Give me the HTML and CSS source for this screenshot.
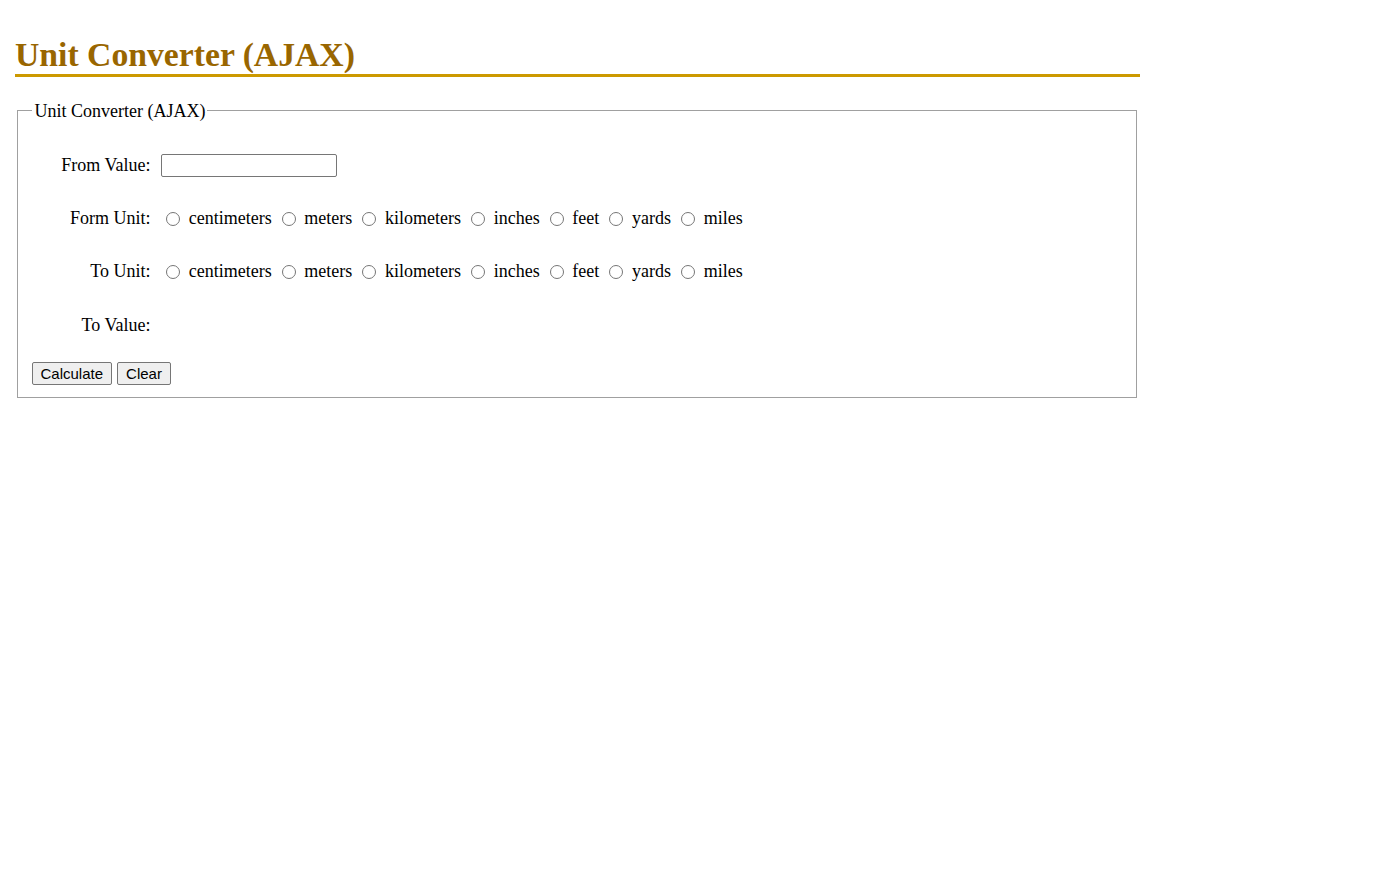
FILE: index.html
```html
<!DOCTYPE html>
<html lang="en">
<head>
<meta charset="utf-8">
<title>Unit Converter (AJAX)</title>
<link rel="stylesheet" href="styles.css">
</head>
<body>
<main class="page">
  <h1 class="title">Unit Converter (AJAX)</h1>
  <form class="converter">
    <fieldset class="box">
      <legend class="box-legend">Unit Converter (AJAX)</legend>
      <div class="row row-first">
        <label class="row-label" for="from_value">From Value:</label>
        <div class="row-field"><input class="text-input" type="text" id="from_value" name="from_value"></div>
      </div>
      <div class="row">
        <span class="row-label">Form Unit:</span>
        <div class="row-field">
          <input class="radio" type="radio" name="from_unit" value="centimeters"> centimeters
          <input class="radio" type="radio" name="from_unit" value="meters"> meters
          <input class="radio" type="radio" name="from_unit" value="kilometers"> kilometers
          <input class="radio" type="radio" name="from_unit" value="inches"> inches
          <input class="radio" type="radio" name="from_unit" value="feet"> feet
          <input class="radio" type="radio" name="from_unit" value="yards"> yards
          <input class="radio" type="radio" name="from_unit" value="miles"> miles
        </div>
      </div>
      <div class="row">
        <span class="row-label">To Unit:</span>
        <div class="row-field">
          <input class="radio" type="radio" name="to_unit" value="centimeters"> centimeters
          <input class="radio" type="radio" name="to_unit" value="meters"> meters
          <input class="radio" type="radio" name="to_unit" value="kilometers"> kilometers
          <input class="radio" type="radio" name="to_unit" value="inches"> inches
          <input class="radio" type="radio" name="to_unit" value="feet"> feet
          <input class="radio" type="radio" name="to_unit" value="yards"> yards
          <input class="radio" type="radio" name="to_unit" value="miles"> miles
        </div>
      </div>
      <div class="row row-result">
        <span class="row-label">To Value:</span>
        <div class="row-field"><span class="result"></span></div>
      </div>
      <div class="actions">
        <button class="btn" type="button">Calculate</button>
        <button class="btn" type="reset">Clear</button>
      </div>
    </fieldset>
  </form>
</main>
</body>
</html>
```

FILE: styles.css
```css
html, body {
  margin: 0;
  padding: 0;
  background: #ffffff;
}

body {
  font-family: "Liberation Serif", "Times New Roman", serif;
  font-size: 18px;
  color: #000000;
}

.page {
  width: 1125px;
  padding: 0 15px;
}

.title {
  margin: 36px 0 0 0;
  font-size: 33.7px;
  font-weight: bold;
  line-height: 38px;
  color: #996600;
  border-bottom: 3px solid #cc9900;
  padding-bottom: 0;
}

.converter {
  margin: 23px 0 0 0;
}

.box {
  margin: 0 3px 0 2px;
  padding: 0 13.5px 12px 13.5px;
  border: 1px solid #a0a0a0;
}

.box-legend {
  padding: 0 2px 0 3px;
  line-height: 21px;
  position: relative;
  top: 1px;
}

.row {
  display: flex;
  align-items: center;
  height: 24px;
  margin-top: 29px;
}

.row-first {
  margin-top: 32px;
}

.row-result {
  margin-top: 30px;
}

.row-label {
  width: 119px;
  text-align: right;
  flex: none;
}

.row-field {
  margin-left: 10px;
  white-space: nowrap;
}

.text-input {
  display: block;
  box-sizing: border-box;
  width: 176px;
  height: 23px;
  margin: 0 0 0 0.5px;
  border: 1px solid #767676;
  border-radius: 2px;
  padding: 1px 2px;
  font-family: "Liberation Sans", Arial, sans-serif;
  font-size: 13.33px;
}

.radio {
  width: 14px;
  height: 14px;
  margin: 3px 4.2px 0 5.5px;
  vertical-align: -2px;
}

.actions {
  display: flex;
  gap: 5px;
  margin-top: 25px;
}

.btn {
  height: 23px;
  padding: 1px 8px;
  margin: 0;
  border: 1px solid #767676;
  border-radius: 2px;
  background: #efefef;
  font-family: "Liberation Sans", Arial, sans-serif;
  font-size: 15px;
  color: #000000;
}
```
